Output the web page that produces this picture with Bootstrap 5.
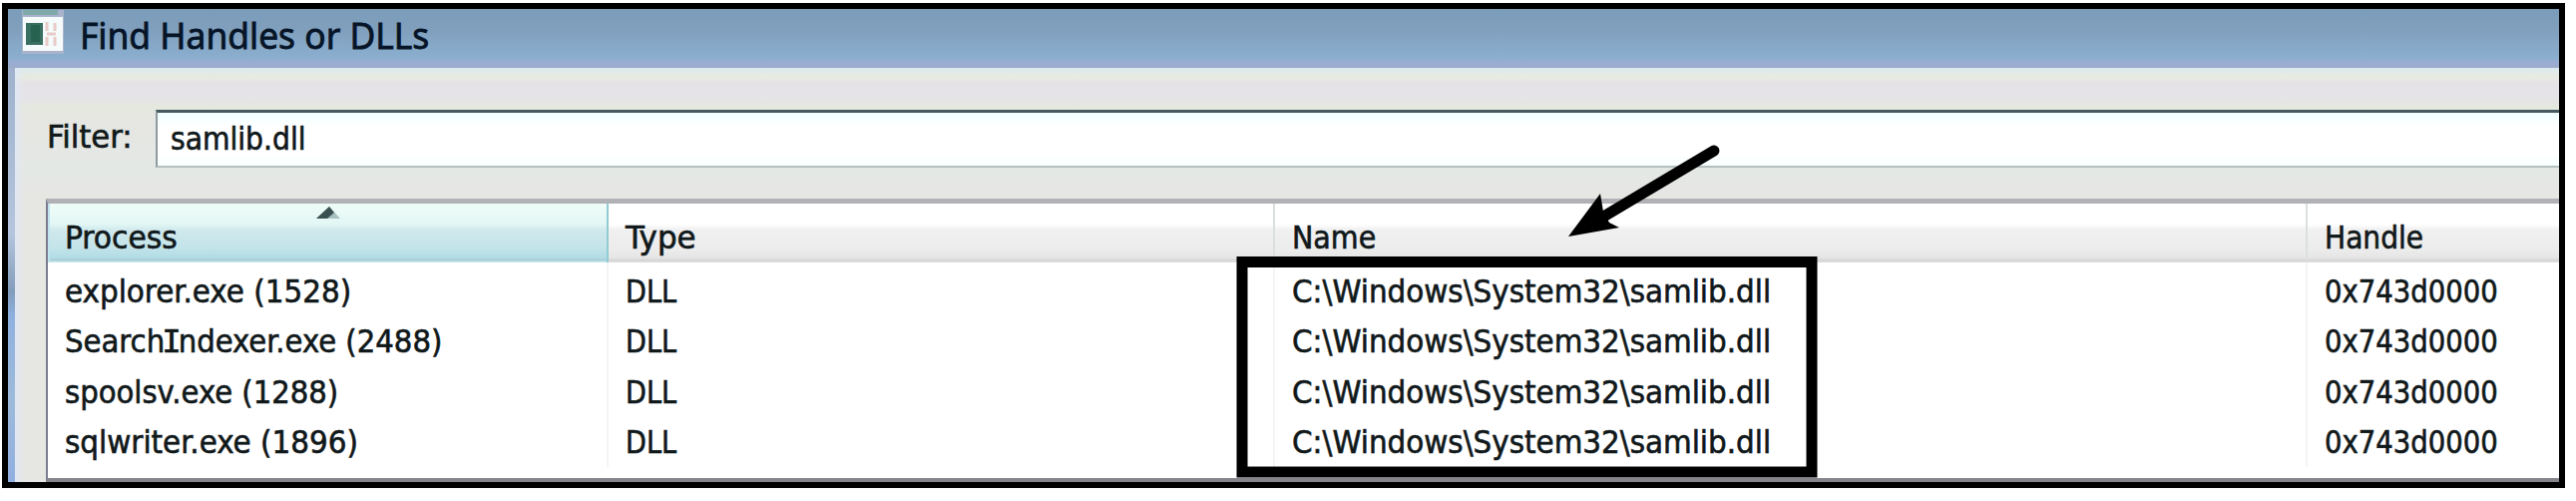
<!DOCTYPE html>
<html lang="en">
<head>
<meta charset="utf-8">
<title>Find Handles or DLLs</title>
<link href="https://cdn.jsdelivr.net/npm/bootstrap@5.3.0/dist/css/bootstrap.min.css" rel="stylesheet">
<style>
body{width:2582px;height:502px;overflow:hidden;background:#fff;color:#10181a;font:32.5px/50px "DejaVu Sans Condensed","DejaVu Sans",sans-serif;font-stretch:condensed;padding:3px 0 0 2px}
.win{width:2569px;height:486px;border:6px solid #000;background:linear-gradient(90deg,#93a9c8,#b9cfec);position:relative;overflow:hidden}
.win-title{height:59px;background:linear-gradient(#7a9dba 0,#809fbd 35%,#8cafcf 84%,#9aacd4 90%,#9bacc9 100%);padding-left:14px}
.win-title .caption{font:37px/50px "Noto Sans",sans-serif;color:#061427;-webkit-text-stroke:.8px #061427;margin-left:15px;margin-top:1px}
.frame-edge{width:7px;background:linear-gradient(#9fb1cc,#b5c5dd 40%,#829dbb 54%,#8fb1e0 60%,#9ebada 80%,#91aee0)}
.client{background:linear-gradient(#dbeaf0 0,#e7ebe0 9px,#e5e2e7 16px,#e5e3e8 30px,#e4e8dc 40px,#e6e6e2 46px,#e4e8e5 100px,#e6e6e3 130px);box-shadow:inset 7px 0 6px -3px #e0e8f5;padding-left:31px}
.filter-row{height:58px;margin-top:42px}
.filter-label{width:110px;padding-top:2px;padding-left:1px}
.filter-box{border:2px solid #8d9a9f;border-top:3px solid #465860;border-right:0;border-bottom-color:#b5bfc0;background:linear-gradient(#f1ffff,#fff 14px,#fff 42px,#f7ffff);padding-left:13px;padding-top:1px}
.grid-view{margin-top:31px;border:2px solid #7d7d92;border-top:5px solid #b1b2b6;border-right:0;border-bottom:4px solid #85858b;background:#fff;height:284px}
.cols{display:grid;grid-template-columns:562px 668px 1035px 1fr}
.head-row{height:59px;background:linear-gradient(#fff 0,#fff 21px,#f0f0f0 26px,#ececec 46px,#e5e5e5 55px,#d5d5d5 56px,#dedede 59px)}
.head-row>div{border-right:2px solid #dcdfdf;padding:9px 0 0 17px;position:relative}
.head-row>div:last-child,.data-row>div:last-child{border-right:0}
.head-row .sorted{background:linear-gradient(#effcf8 0,#e3f7f5 20px,#cfe8ec 27px,#c4e4ea 43px,#b2dce5 55px,#a5c7d2 56px,#cceef3 59px);border-right-color:#91cbd3;box-shadow:inset 2px 0 #c1e4ee}
.data-row{height:50.3px}
.data-row>div{border-right:2px solid #f5f5f5;padding-left:17px;padding-top:4px}
.fit{display:inline-block;white-space:nowrap;transform-origin:0 50%;-webkit-text-stroke:.6px currentColor}
.serif-i{font-family:"DejaVu Sans Mono",monospace;margin:0 -3px;line-height:1}
.sort-mark{position:absolute;left:267px;top:2px}
.notes{position:absolute;left:-8px;top:-9px}
</style>
</head>
<body>
<div class="win d-flex flex-column">
  <div class="win-title d-flex align-items-start">
    <svg width="43" height="50" viewBox="0 0 43 50"><rect x="0" y="1" width="42" height="44" fill="#a9b4cc"/><rect x="1" y="8" width="40" height="34" fill="#f5fafa"/><rect x="1" y="1" width="35" height="5" fill="#7fa9a9"/><rect x="4" y="14" width="17" height="22" fill="#386f60"/><rect x="9" y="16" width="9" height="17" fill="#276250"/><path d="M25 13v9M25 28v9M33 14v8M33 28v9M25 25h9" stroke="#e8cbc8" stroke-width="3"/></svg>
    <span class="caption fit" data-w="350">Find Handles or DLLs</span>
  </div>
  <div class="d-flex flex-grow-1">
    <div class="frame-edge"></div>
    <div class="client flex-grow-1">
      <div class="filter-row d-flex">
        <div class="filter-label"><span class="fit" data-w="85">Filter:</span></div>
        <div class="filter-box flex-grow-1"><span class="fit" data-w="136">samlib.dll</span></div>
      </div>
      <div class="grid-view">
        <div class="cols head-row">
          <div class="sorted"><span class="fit" data-w="113">Process</span><svg class="sort-mark" width="28" height="14"><path d="M2 13L15 1 26 13Z" fill="#a9c0c0"/><path d="M2 13L15 1 20 7 13 13Z" fill="#38504f"/></svg></div>
          <div><span class="fit" data-w="71">Type</span></div>
          <div><span class="fit" data-w="84">Name</span></div>
          <div><span class="fit" data-w="99">Handle</span></div>
        </div>
        <div class="cols data-row"><div><span class="fit" data-w="287">explorer.exe (1528)</span></div><div><span class="fit" data-w="51">DLL</span></div><div><span class="fit" data-w="480">C:\Windows\System32\samlib.dll</span></div><div><span class="fit" data-w="174">0x743d0000</span></div></div>
        <div class="cols data-row"><div><span class="fit" data-w="378">Search<span class="serif-i">I</span>ndexer.exe (2488)</span></div><div><span class="fit" data-w="51">DLL</span></div><div><span class="fit" data-w="480">C:\Windows\System32\samlib.dll</span></div><div><span class="fit" data-w="174">0x743d0000</span></div></div>
        <div class="cols data-row"><div><span class="fit" data-w="274">spoolsv.exe (1288)</span></div><div><span class="fit" data-w="51">DLL</span></div><div><span class="fit" data-w="480">C:\Windows\System32\samlib.dll</span></div><div><span class="fit" data-w="174">0x743d0000</span></div></div>
        <div class="cols data-row"><div><span class="fit" data-w="294">sqlwriter.exe (1896)</span></div><div><span class="fit" data-w="51">DLL</span></div><div><span class="fit" data-w="480">C:\Windows\System32\samlib.dll</span></div><div><span class="fit" data-w="174">0x743d0000</span></div></div>
      </div>
    </div>
  </div>
  <!-- highlight box and arrow over the Name column -->
  <svg class="notes" width="2582" height="502"><rect x="1245" y="262.5" width="571" height="210.5" fill="none" stroke="#000" stroke-width="11"/><path d="M1718 151L1604 219" stroke="#000" stroke-width="11" stroke-linecap="round"/><path d="M1572 237L1604 194 1607 212 1613 223 1623 228Z"/></svg>
</div>
<script src="https://cdn.jsdelivr.net/npm/bootstrap@5.3.0/dist/js/bootstrap.bundle.min.js"></script>
<script>
// squeeze each label horizontally to its column text width
document.querySelectorAll('.fit').forEach(function (el) {
  el.style.transform = 'scaleX(' + (el.dataset.w / el.offsetWidth) + ')';
});
</script>
</body>
</html>
